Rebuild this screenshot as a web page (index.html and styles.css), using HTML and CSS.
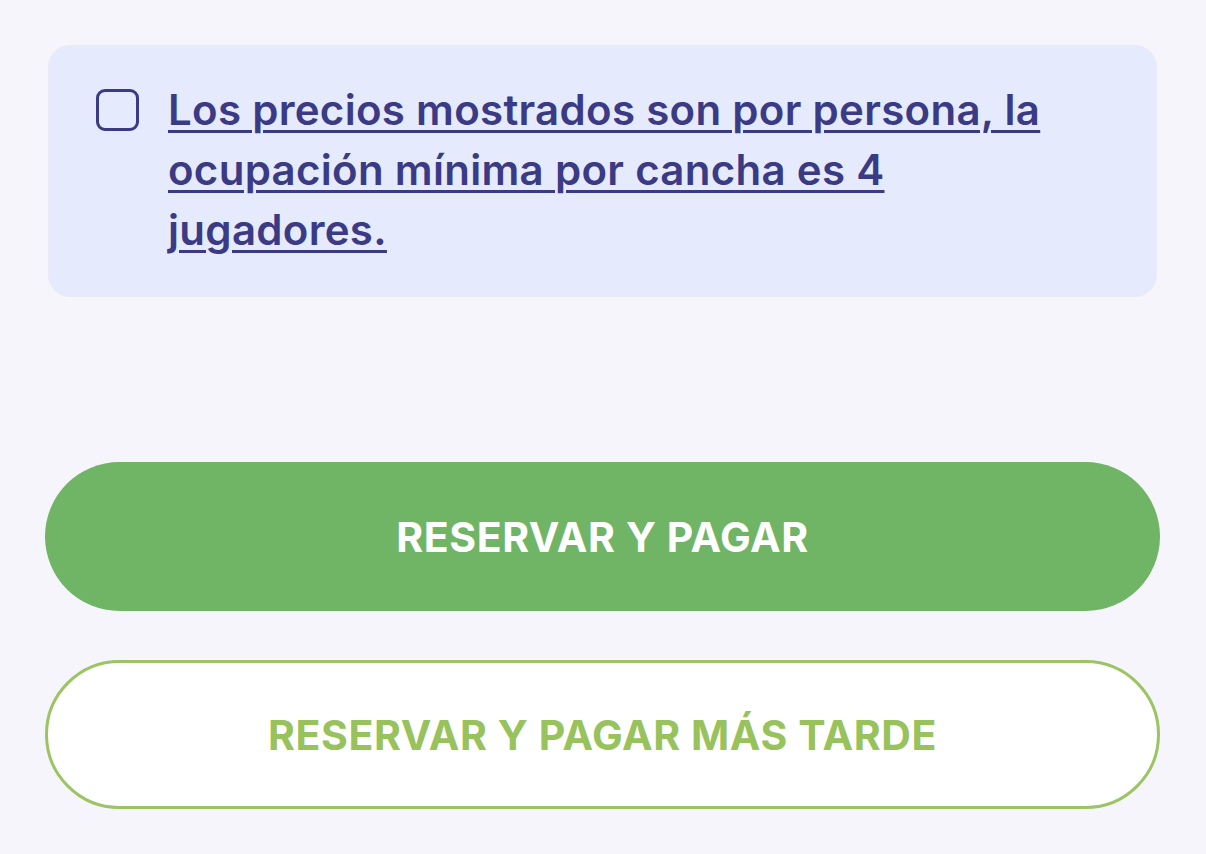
FILE: index.html
```html
<!DOCTYPE html>
<html lang="es">
<head>
<meta charset="utf-8">
<link rel="stylesheet" href="styles.css">
</head>
<body>
<main class="page">
  <section class="notice">
    <span class="checkbox"></span>
    <a class="notice-text" href="#">Los precios mostrados son por persona, la ocupación mínima por cancha es 4 jugadores.</a>
  </section>
  <div class="actions">
    <button class="btn btn-primary">RESERVAR Y PAGAR</button>
    <button class="btn btn-outline">RESERVAR Y PAGAR MÁS TARDE</button>
  </div>
</main>
</body>
</html>
```
FILE: styles.css
```css
html, body {
  margin: 0;
  padding: 0;
  background: #f5f5fb;
}
body {
  font-family: Inter, "Noto Sans", sans-serif;
  width: 1206px;
  height: 854px;
  overflow: hidden;
}
.page {
  padding: 45px 46px 0 45px;
  display: flex;
  flex-direction: column;
}
.notice {
  margin: 0 3px;
  background: #e5eafc;
  border: 1px solid #e9ecf6;
  border-radius: 22px;
  padding: 43px 60px 36px 47px;
  display: flex;
  align-items: flex-start;
  gap: 29px;
}
.checkbox {
  flex: none;
  width: 37px;
  height: 36px;
  border: 3.5px solid #3b3a84;
  border-radius: 9px;
}
.notice-text {
  color: #3b3a84;
  font-size: 42px;
  font-weight: 600;
  line-height: 60px;
  letter-spacing: 0.3px;
  margin-top: -9px;
  text-decoration: underline;
  text-decoration-thickness: 3px;
  text-underline-offset: 5px;
  max-width: 910px;
}
.actions {
  margin-top: 165px;
  display: flex;
  flex-direction: column;
  gap: 49px;
}
.btn {
  height: 149px;
  border-radius: 75px;
  font-family: Inter, "Noto Sans", sans-serif;
  font-size: 41px;
  font-weight: 700;
  letter-spacing: 0.6px;
  box-sizing: border-box;
  cursor: pointer;
}
.btn-primary {
  background: #70b466;
  color: #ffffff;
  border: none;
}
.btn-outline {
  background: #ffffff;
  color: #97c25c;
  border: 3px solid #9cc464;
}
```
